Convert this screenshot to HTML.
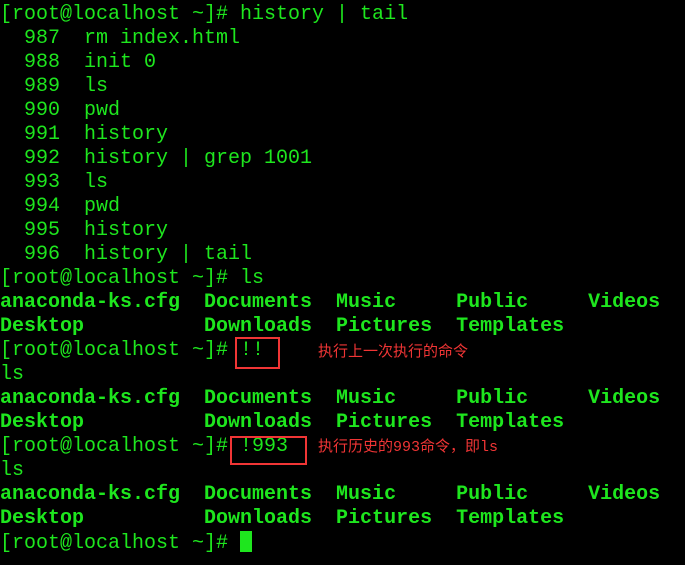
<!DOCTYPE html>
<html><head><meta charset="utf-8"><style>
body{margin:0;background:#000;width:685px;height:565px;overflow:hidden;position:relative}
pre{margin:0;position:absolute;left:0;top:3px;font:20px/24px "Liberation Mono",monospace;color:#1ee61e}
b{color:#1ee61e}
.box{position:absolute;border:2px solid #f03535}
.n{position:absolute;color:#f03535;font:15px/17px "Liberation Mono","Noto Sans CJK SC",sans-serif}
.cur{display:inline-block;width:12px;height:21px;background:#1ee61e;vertical-align:-4px}
</style></head><body>
<pre>[root@localhost ~]# history | tail
  987  rm index.html
  988  init 0
  989  ls
  990  pwd
  991  history
  992  history | grep 1001
  993  ls
  994  pwd
  995  history
  996  history | tail
[root@localhost ~]# ls
<b>anaconda-ks.cfg  Documents  Music     Public     Videos
Desktop          Downloads  Pictures  Templates</b>
[root@localhost ~]# !!
ls
<b>anaconda-ks.cfg  Documents  Music     Public     Videos
Desktop          Downloads  Pictures  Templates</b>
[root@localhost ~]# !993
ls
<b>anaconda-ks.cfg  Documents  Music     Public     Videos
Desktop          Downloads  Pictures  Templates</b>
[root@localhost ~]# <span class="cur"></span></pre>
<div class="box" style="left:235px;top:337px;width:41px;height:28px"></div>
<div class="box" style="left:230px;top:436px;width:73px;height:25px"></div>
<div class="n" style="left:318px;top:344px">执行上一次执行的命令</div>
<div class="n" style="left:318px;top:439px">执行历史的993命令，即ls</div>
</body></html>
